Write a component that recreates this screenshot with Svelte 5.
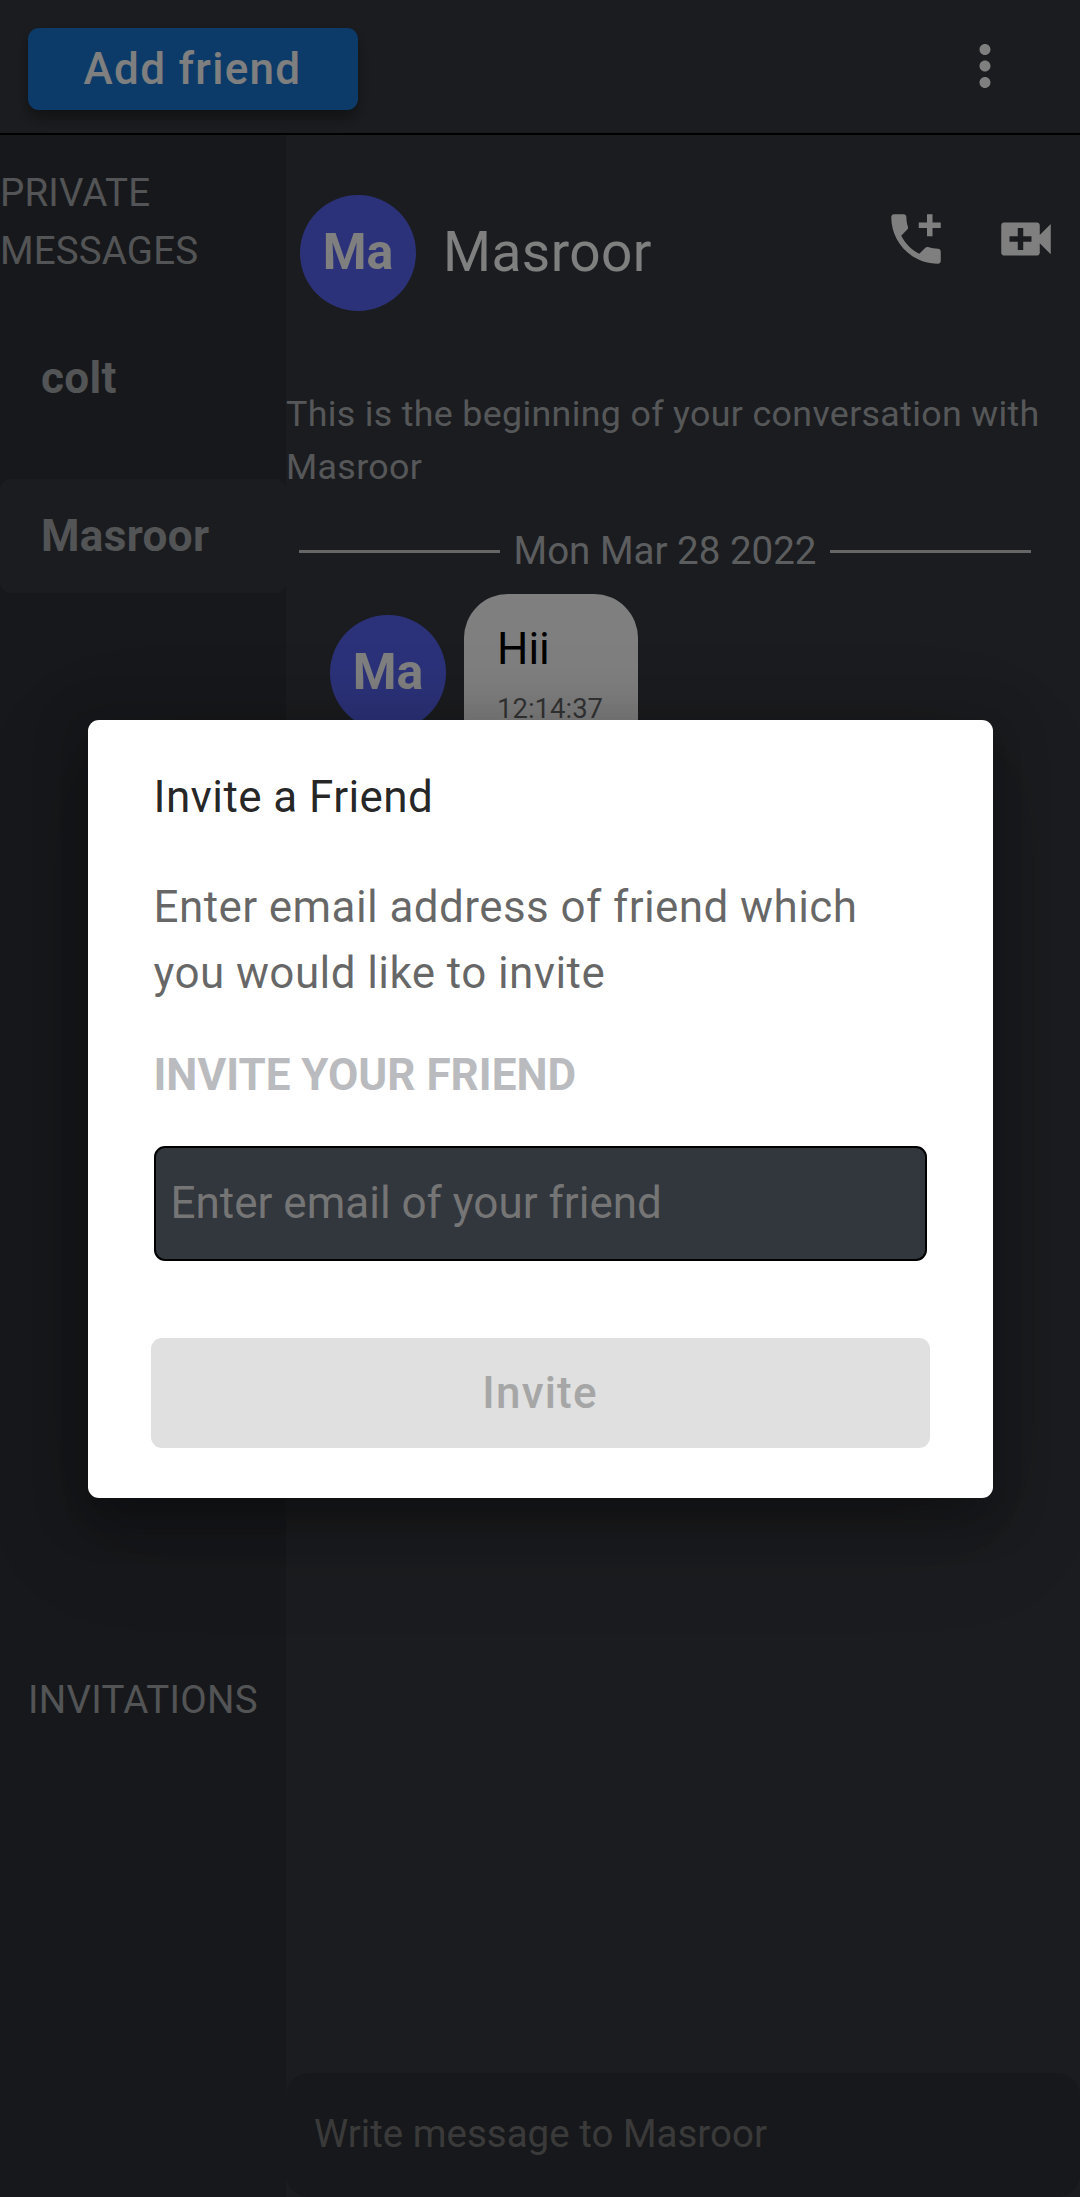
<script>
	// chat page behind an open invite dialog
	const conversations = [
		{ name: 'colt', active: false },
		{ name: 'Masroor', active: true },
	];
</script>

<div class="page">
	<header class="topbar">
		<button class="add-friend">Add friend</button>
		<svg class="more" viewBox="0 0 24 24" aria-hidden="true">
			<path d="M12 8c1.1 0 2-.9 2-2s-.9-2-2-2-2 .9-2 2 .9 2 2 2zm0 2c-1.1 0-2 .9-2 2s.9 2 2 2 2-.9 2-2-.9-2-2-2zm0 6c-1.1 0-2 .9-2 2s.9 2 2 2 2-.9 2-2-.9-2-2-2z" />
		</svg>
	</header>

	<div class="body">
		<aside class="sidebar">
			<div class="section-title">PRIVATE MESSAGES</div>
			<div class="conversations">
				{#each conversations as c}
					<div class="conversation" class:active={c.active}>{c.name}</div>
				{/each}
			</div>
			<div class="invitations">INVITATIONS</div>
		</aside>

		<main class="chat">
			<div class="chat-head">
				<div class="who">
					<div class="avatar">Ma</div>
					<div class="name">Masroor</div>
				</div>
				<div class="actions">
					<svg viewBox="0 0 24 24" aria-hidden="true">
						<path d="M20 15.5c-1.25 0-2.45-.2-3.57-.57-.35-.11-.74-.03-1.02.24l-2.2 2.2c-2.83-1.44-5.15-3.75-6.59-6.59l2.2-2.21c.28-.26.36-.65.25-1C8.7 6.45 8.5 5.25 8.5 4c0-.55-.45-1-1-1H4c-.55 0-1 .45-1 1 0 9.39 7.61 17 17 17 .55 0 1-.45 1-1v-3.5c0-.55-.45-1-1-1zM21 6h-3V3h-2v3h-3v2h3v3h2V8h3z" />
					</svg>
					<svg viewBox="0 0 24 24" aria-hidden="true">
						<path d="M17 10.5V7c0-.55-.45-1-1-1H4c-.55 0-1 .45-1 1v10c0 .55.45 1 1 1h12c.55 0 1-.45 1-1v-3.5l4 4v-11l-4 4zM14 13h-3v3H9v-3H6v-2h3V8h2v3h3v2z" />
					</svg>
				</div>
			</div>

			<p class="intro">This is the beginning of your conversation with Masroor</p>

			<div class="date-row">
				<span class="rule"></span>
				<span class="date">Mon Mar 28 2022</span>
				<span class="rule"></span>
			</div>

			<div class="message">
				<div class="avatar">Ma</div>
				<div class="bubble">
					<div class="text">Hii</div>
					<div class="time">12:14:37</div>
				</div>
			</div>

			<div class="composer">
				<input placeholder="Write message to Masroor" />
			</div>
		</main>
	</div>

	<div class="backdrop">
		<div class="dialog" role="dialog">
			<h2>Invite a Friend</h2>
			<p>Enter email address of friend which you would like to invite</p>
			<div class="field-label">INVITE YOUR FRIEND</div>
			<input class="email" placeholder="Enter email of your friend" />
			<button class="invite" disabled>Invite</button>
		</div>
	</div>
</div>

<style>
	:global(body) {
		margin: 0;
		background: #36393f;
	}
	.page {
		position: relative;
		width: 1080px;
		height: 2197px;
		display: flex;
		flex-direction: column;
		overflow: hidden;
		font-family: Roboto, 'Liberation Sans', sans-serif;
		background: #36393f;
		color: #fff;
	}
	.topbar {
		height: 135px;
		box-sizing: border-box;
		border-bottom: 2px solid #000;
		flex: none;
		display: flex;
		align-items: flex-start;
		justify-content: space-between;
		padding: 28px 62px 0 28px;
	}
	.add-friend {
		width: 330px;
		height: 82px;
		border: none;
		border-radius: 11px;
		background: #1976d2;
		color: #fff;
		font: 500 44px Roboto, sans-serif;
		letter-spacing: 1.3px;
		padding: 0 1px 0 0;
		box-shadow: 0 8px 14px rgba(0, 0, 0, 0.35);
	}
	.more {
		width: 66px;
		height: 66px;
		margin-top: 5px;
		fill: #fff;
	}
	.body {
		flex: 1;
		display: flex;
		min-height: 0;
	}
	.sidebar {
		width: 286px;
		flex: none;
		background: #2f3136;
		padding-top: 29px;
		color: #a6a8ab;
	}
	.section-title {
		font-size: 38.5px;
		line-height: 58px;
		letter-spacing: 0.15px;
	}
	.conversations {
		margin-top: 41px;
		display: flex;
		flex-direction: column;
		gap: 44px;
	}
	.conversation {
		height: 114px;
		padding-left: 41px;
		display: flex;
		align-items: center;
		border-radius: 11px;
		font-size: 44px;
		font-weight: 700;
		letter-spacing: 0.35px;
	}
	.conversation.active {
		background: #36393f;
	}
	.invitations {
		margin-top: 1078px;
		padding-left: 28px;
		font-size: 38.5px;
		line-height: 58px;
		letter-spacing: 0.28px;
	}
	.chat {
		flex: 1;
		min-width: 0;
		display: flex;
		flex-direction: column;
		padding-top: 60px;
	}
	.chat-head {
		display: flex;
		justify-content: space-between;
		padding: 0 21px 0 14px;
	}
	.who {
		display: flex;
		align-items: center;
		gap: 27px;
	}
	.avatar {
		width: 116px;
		height: 116px;
		flex: none;
		box-sizing: border-box;
		padding-bottom: 3px;
		border-radius: 50%;
		background: #5865f2;
		display: flex;
		align-items: center;
		justify-content: center;
		font-size: 50px;
		font-weight: 700;
	}
	.name {
		font-size: 55px;
		letter-spacing: 0.45px;
		padding-bottom: 2px;
	}
	.actions {
		display: flex;
		gap: 44px;
		margin-top: 11px;
	}
	.actions svg {
		width: 66px;
		height: 66px;
		fill: #fff;
	}
	.intro {
		margin: 77px 0 0;
		font-size: 35.75px;
		line-height: 53px;
		letter-spacing: 0.34px;
		color: #adafb2;
	}
	.date-row {
		margin: 28px 0 0 13px;
		width: 732px;
		display: flex;
		align-items: center;
		font-size: 38.5px;
		line-height: 58px;
		color: #b9bbbe;
	}
	.rule {
		flex: 1;
		height: 3px;
		background: #cccccc;
	}
	.date {
		padding: 0 14px;
	}
	.message {
		margin: 14px 0 0 44px;
		display: flex;
		align-items: flex-start;
		gap: 18px;
	}
	.message .avatar {
		margin-top: 21px;
	}
	.bubble {
		background: #fff;
		border-radius: 44px;
		padding: 22px 35px 34px 33px;
		color: #000;
	}
	.text {
		font-size: 44px;
		line-height: 66px;
	}
	.time {
		margin-top: 6px;
		font-size: 27.5px;
		line-height: 41px;
		color: rgba(0, 0, 0, 0.6);
	}
	.composer {
		margin-top: auto;
		height: 124px;
		flex: none;
		background: #2f3136;
		border-radius: 22px;
		padding: 0 28px 4px;
		display: flex;
		align-items: center;
		box-sizing: border-box;
	}
	.composer input {
		flex: 1;
		border: none;
		outline: none;
		padding: 0;
		background: transparent;
		font: 400 38.5px Roboto, sans-serif;
	}
	.composer input::placeholder {
		color: #757575;
		opacity: 1;
	}
	.backdrop {
		position: absolute;
		inset: 0;
		background: rgba(0, 0, 0, 0.5);
		display: flex;
		justify-content: center;
		align-items: flex-start;
		padding-top: 720px;
		box-sizing: border-box;
	}
	.dialog {
		width: 905px;
		height: 778px;
		box-sizing: border-box;
		background: #fff;
		border-radius: 11px;
		padding: 0 63px 0 66px;
		color: rgba(0, 0, 0, 0.87);
		box-shadow:
			0 30px 105px 10px rgba(0, 0, 0, 0.14),
			0 11px 40px 20px rgba(0, 0, 0, 0.12),
			0 30px 40px -15px rgba(0, 0, 0, 0.2);
	}
	h2 {
		margin: 0;
		padding-top: 44px;
		font-size: 44px;
		font-weight: 400;
		line-height: 66px;
		letter-spacing: 0.41px;
	}
	.dialog p {
		margin: 44px 0 0;
		font-size: 44px;
		line-height: 66px;
		letter-spacing: 0.41px;
		color: rgba(0, 0, 0, 0.6);
	}
	.field-label {
		margin-top: 36px;
		font-size: 44px;
		font-weight: 700;
		line-height: 66px;
		color: #b9bbbe;
	}
	.email {
		display: block;
		margin: 38px 0 0 0;
		width: 773px;
		height: 115px;
		box-sizing: border-box;
		border: 2.75px solid #000;
		border-radius: 11px;
		background: #32373d;
		padding: 0 15px 2px;
		outline: none;
		font: 400 44px Roboto, sans-serif;
		color: #fff;
	}
	.email::placeholder {
		color: #757575;
		opacity: 1;
	}
	.invite {
		display: block;
		margin: 77px 0 0 -3px;
		width: 779px;
		height: 110px;
		border: none;
		border-radius: 11px;
		background: #e0e0e0;
		color: #a6a6a6;
		font: 500 44px Roboto, sans-serif;
		letter-spacing: 1.2px;
	}
</style>
